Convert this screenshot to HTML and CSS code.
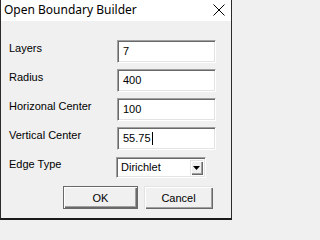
FILE: index.html
```html
<!DOCTYPE html>
<html>
<head>
<meta charset="utf-8">
<link rel="stylesheet" href="styles.css">
</head>
<body>
<div class="window">
  <div class="titlebar">
    <span class="title">Open Boundary Builder</span>
    <svg class="close" width="12" height="12" viewBox="0 0 12 12"><path d="M0.5 0.5 L11.5 11.5 M11.5 0.5 L0.5 11.5" stroke="#000" stroke-width="1" fill="none"/></svg>
  </div>
  <div class="client">
    <div class="form">
      <div class="label">Layers</div>
      <div class="field">7</div>
      <div class="label">Radius</div>
      <div class="field">400</div>
      <div class="label">Horizonal Center</div>
      <div class="field">100</div>
      <div class="label">Vertical Center</div>
      <div class="field">55.75<span class="caret"></span></div>
      <div class="label">Edge Type</div>
      <div class="combo">
        <span class="combo-text">Dirichlet</span>
        <span class="combo-btn"><svg width="7" height="4" viewBox="0 0 7 4"><path d="M0 0 H7 L3.5 4 Z" fill="#000"/></svg></span>
      </div>
    </div>
    <div class="buttons">
      <div class="btn btn-default">OK</div>
      <div class="btn btn-cancel">Cancel</div>
    </div>
  </div>
</div>
</body>
</html>
```
FILE: styles.css
```css
html, body { margin: 0; padding: 0; background: #f0f0f0; }
.window {
  width: 232px;
  height: 220px;
  box-sizing: border-box;
  border-left: 1px solid #2b2b2b;
  border-right: 1px solid #2b2b2b;
  border-bottom: 2px solid #1a1a1a;
  display: flex;
  flex-direction: column;
  background: #f0f0f0;
}
.titlebar {
  height: 21px;
  background: #fff;
  display: flex;
  align-items: center;
  justify-content: space-between;
  padding-left: 3px;
  padding-right: 6px;
}
.title {
  font-family: "Noto Sans", sans-serif;
  font-size: 12px;
  line-height: 16px;
  color: #000;
  margin-top: -2px;
}
.close { display: block; margin-top: -2px; }
.client {
  flex: 1;
  font-family: "Liberation Sans", Arial, sans-serif;
  font-size: 11px;
  color: #000;
}
.form {
  display: grid;
  grid-template-columns: 108px 99px;
  row-gap: 6px;
  padding: 19px 0 0 8px;
}
.label {
  line-height: 13px;
  padding-top: 2px;
}
.field {
  height: 23px;
  box-sizing: border-box;
  line-height: 17px;
  background: #fff;
  border: 1px solid;
  border-color: #a0a0a0 #fff #fff #a0a0a0;
  box-shadow: inset 1px 1px #696969, inset -1px -1px #e3e3e3;
  padding-left: 5px;
  display: flex;
  align-items: center;
}
.caret {
  display: inline-block;
  width: 1px;
  height: 13px;
  background: #000;
  margin-left: 1px;
}
.combo {
  width: 90px;
  height: 21px;
  box-sizing: border-box;
  margin-left: -1px;
  margin-top: 1px;
  background: #fff;
  border: 1px solid;
  border-color: #a0a0a0 #fff #fff #a0a0a0;
  box-shadow: inset 1px 1px #696969, inset -1px -1px #e3e3e3;
  padding: 2px;
  display: flex;
  align-items: stretch;
}
.combo-text {
  flex: 1;
  padding-left: 2px;
  line-height: 15px;
}
.combo-btn {
  width: 13px;
  background: #f0f0f0;
  box-shadow: inset 1px 1px #e3e3e3, inset 2px 2px #fff, inset -1px -1px #696969, inset -2px -2px #a0a0a0;
  display: flex;
  align-items: center;
  justify-content: center;
}
.combo-btn svg { display: block; margin-left: -1px; }
.buttons {
  display: flex;
  gap: 6px;
  padding-left: 62px;
  margin-top: 8px;
}
.btn {
  height: 23px;
  box-sizing: border-box;
  display: flex;
  align-items: center;
  justify-content: center;
  background: #f0f0f0;
}
.btn-default {
  width: 75px;
  border: 1px solid #696969;
  box-shadow: inset 1px 1px #fff, inset -1px -1px #696969, inset -2px -2px #a0a0a0;
}
.btn-cancel {
  width: 69px;
  box-shadow: inset 1px 1px #e3e3e3, inset 2px 2px #fff, inset -1px -1px #696969, inset -2px -2px #a0a0a0;
}
```
